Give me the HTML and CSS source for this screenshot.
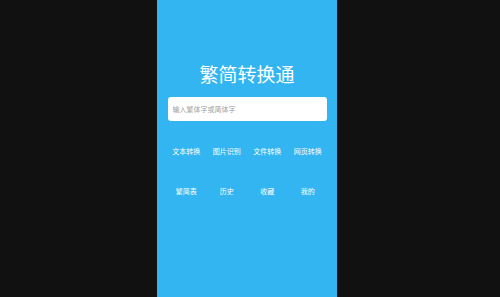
FILE: index.html
```html
<!DOCTYPE html>
<html lang="zh-CN">
<head>
    <meta charset="UTF-8">
    <meta name="viewport" content="width=device-width, initial-scale=1.0">
    <title>繁简转换通</title>
    <link rel="stylesheet" href="styles.css">
</head>
<body>
    <div class="phone">
        <h1 class="title">繁简转换通</h1>
        <input type="text" class="search" placeholder="输入繁体字或简体字">

        <!-- menu -->
        <div class="menu">
            <div class="item">文本转换</div>
            <div class="item">图片识别</div>
            <div class="item">文件转换</div>
            <div class="item">网页转换</div>
            <div class="item">繁简表</div>
            <div class="item">历史</div>
            <div class="item">收藏</div>
            <div class="item">我的</div>
        </div>
    </div>
</body>
</html>
```

FILE: styles.css
```css
html, body {
    height: 100%;
}

body {
    margin: 0;
    background: #111111;
    font-family: "Noto Sans CJK SC", "Noto Sans", sans-serif;
}

.phone {
    width: 180px;
    margin-left: 157px;
    height: 100%;
    background: #33b5f1;
    display: flex;
    flex-direction: column;
    align-items: center;
    padding-top: 62px;
    box-sizing: border-box;
}

.title {
    margin: 0;
    font-size: 19px;
    line-height: 24px;
    font-weight: normal;
    color: #ffffff;
}

.search {
    margin-top: 11px;
    width: 159px;
    height: 24px;
    box-sizing: border-box;
    border: 0;
    border-radius: 3px;
    padding: 0 5px;
    background: #ffffff;
    font-family: "Noto Sans CJK SC", sans-serif;
    font-size: 7px;
    outline: none;
}

.search::placeholder {
    color: #a0a0a0;
}

.menu {
    margin-top: 10px;
    width: 162px;
    display: grid;
    grid-template-columns: repeat(4, 1fr);
}

.item {
    height: 40px;
    display: flex;
    align-items: center;
    justify-content: center;
    color: #ffffff;
    font-size: 7px;
}
```
